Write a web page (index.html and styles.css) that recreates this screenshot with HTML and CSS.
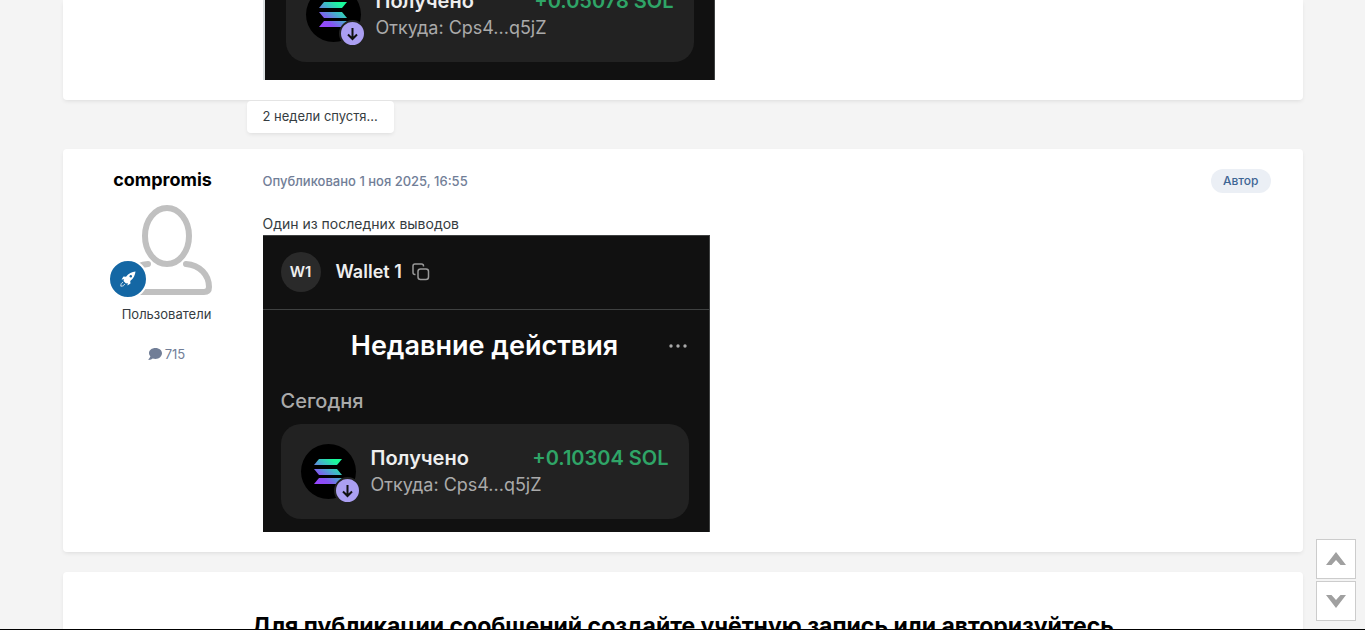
FILE: index.html
```html
<!DOCTYPE html>
<html lang="ru">
<head>
    <meta charset="UTF-8">
    <meta name="viewport" content="width=device-width, initial-scale=1.0">
    <title>Один из последних выводов</title>
    <link rel="stylesheet" href="styles.css">
</head>
<body>
    <!-- shared shapes -->
    <svg class="defs" width="0" height="0" aria-hidden="true">
        <defs>
            <linearGradient id="sol-gradient" gradientUnits="userSpaceOnUse" x1="4" y1="26" x2="24" y2="0">
                <stop offset="0" stop-color="#9945ff"/>
                <stop offset="0.25" stop-color="#8752f3"/>
                <stop offset="0.6" stop-color="#43b4ca"/>
                <stop offset="0.9" stop-color="#19fb9b"/>
            </linearGradient>
            <symbol id="sol" viewBox="0 0 28 26">
                <g fill="url(#sol-gradient)">
                    <path d="M5 0h23l-5 6H0z"/>
                    <path d="M0 10h23l5 6H5z"/>
                    <path d="M5 19h23l-5 6H0z"/>
                </g>
            </symbol>
            <symbol id="arrow-down" viewBox="0 0 23 23">
                <path d="M11.500 6v11M7 12.500l4.500 4.500 4.500-4.500" fill="none" stroke="#111" stroke-width="2"/>
            </symbol>
        </defs>
    </svg>

    <main class="topic">
        <article class="post post-first">
            <div class="post-body">
                <div class="wallet wallet-cut">
                    <div class="tx">
                        <div class="coin">
                            <svg class="coin-logo"><use href="#sol"/></svg>
                            <span class="coin-badge"><svg><use href="#arrow-down"/></svg></span>
                        </div>
                        <div class="tx-info">
                            <div class="tx-row"><strong>Получено</strong><span class="amount">+0.05078 SOL</span></div>
                            <div class="tx-from">Откуда: Cps4...q5jZ</div>
                        </div>
                    </div>
                </div>
            </div>
        </article>

        <div class="gap-note">2 недели спустя...</div>

        <article class="post">
            <aside class="author">
                <h3><a href="#user">compromis</a></h3>
                <div class="author-info">
                    <div class="avatar">
                        <svg class="avatar-img" viewBox="0 0 90 90">
                            <g fill="none" stroke="#c0c0c0" stroke-width="6" stroke-linecap="round">
                                <ellipse cx="45" cy="31" rx="22" ry="28"/>
                                <path d="M26 59C12 60 3 70 3 82Q3 87 8 87H82Q87 87 87 82C87 70 78 60 64 59"/>
                            </g>
                        </svg>
                        <span class="rank">
                            <svg viewBox="0 0 16 16">
                                <path fill="#fff" d="M15.500.5C12 .8 8.500 2.500 6 5.800L3.500 5.500 1.500 8.500l2.600-.2-.6 1.700 2.500 2.500 1.700-.6-.2 2.600 3-2-.3-2.500c3.300-2.500 5-6 5.300-9.500z"/>
                                <circle cx="10.800" cy="5.200" r="1.200" fill="#1467a4"/>
                                <path fill="none" stroke="#fff" stroke-width="0.800" d="M3 11.500C1.500 11.500.8 13 .8 15.200 3 15.200 4.500 14.500 4.500 13"/>
                            </svg>
                        </span>
                    </div>
                    <div class="group">Пользователи</div>
                    <a class="count" href="#posts">
                        <svg viewBox="0 0 14 12">
                            <path fill="#717e97" d="M7.500 0C3.800 0 1 2.200 1 5c0 1.300.5 2.400 1.400 3.300C2 9.800.6 11.200.5 11.300c-.2.200 0 .7.300.7 1.700 0 3-.8 3.900-1.500.8.3 1.800.5 2.800.5C11.200 11 14 8.200 14 5.300S11.200 0 7.500 0z"/>
                        </svg>
                        715
                    </a>
                </div>
            </aside>
            <div class="post-body">
                <header class="post-header">
                    <a class="date" href="#post">Опубликовано 1 ноя 2025, 16:55</a>
                    <span class="op">Автор</span>
                </header>
                <p>Один из последних выводов</p>
                <div class="wallet">
                    <div class="wallet-head">
                        <span class="wallet-icon">W1</span>
                        <span class="wallet-name">Wallet 1</span>
                        <svg class="copy" viewBox="0 0 18 18">
                            <g fill="none" stroke="#999" stroke-width="1.500">
                                <rect x="6" y="6" width="10.500" height="10.500" rx="2.500"/>
                                <path d="M3.500 11.500H3Q1 11.500 1 9.500V3Q1 1 3 1H9.500Q11.500 1 11.500 3V3.500"/>
                            </g>
                        </svg>
                    </div>
                    <div class="wallet-title">
                        <h2>Недавние действия</h2>
                        <svg class="dots" viewBox="0 0 18 4">
                            <g fill="#aaa"><circle cx="2" cy="2" r="1.700"/><circle cx="9" cy="2" r="1.700"/><circle cx="16" cy="2" r="1.700"/></g>
                        </svg>
                    </div>
                    <div class="day">Сегодня</div>
                    <div class="tx">
                        <div class="coin">
                            <svg class="coin-logo"><use href="#sol"/></svg>
                            <span class="coin-badge"><svg><use href="#arrow-down"/></svg></span>
                        </div>
                        <div class="tx-info">
                            <div class="tx-row"><strong>Получено</strong><span class="amount">+0.10304 SOL</span></div>
                            <div class="tx-from">Откуда: Cps4...q5jZ</div>
                        </div>
                    </div>
                </div>
            </div>
        </article>

        <section class="login">
            <h2>Для публикации сообщений создайте учётную запись или авторизуйтесь</h2>
        </section>
    </main>

    <nav class="scroll-nav">
        <button type="button" aria-label="Наверх">
            <svg viewBox="0 0 20 14"><path fill="#a0a0a0" d="M0 13L10 0l10 13h-5.500L10 8l-4.500 5z"/></svg>
        </button>
        <button type="button" aria-label="Вниз">
            <svg viewBox="0 0 20 14"><path fill="#a0a0a0" d="M0 1h5.500L10 6l4.500-5H20L10 14z"/></svg>
        </button>
    </nav>
    <div class="bottom-line"></div>
</body>
</html>
```
FILE: styles.css
```css
* {
    margin: 0;
    padding: 0;
    box-sizing: border-box;
}
body {
    height: 100vh;
    overflow: hidden;
    background: #f4f4f4;
    color: #353c41;
    font-family: Inter, "Liberation Sans", sans-serif;
    font-size: 14px;
    line-height: 22px;
}
a {
    color: inherit;
    text-decoration: none;
}
svg {
    display: block;
}
.defs {
    position: absolute;
}
.topic {
    max-width: 1240px;
    margin: 0 auto;
}
.post,
.login {
    background: #fff;
    border-radius: 4px;
    box-shadow: 0 2px 4px -1px rgba(0,0,0,0.1);
}
.post {
    display: flex;
    padding-bottom: 20px;
    margin-bottom: 20px;
}
.post-first {
    padding-left: 200px;
    margin-bottom: 0;
    border-radius: 0 0 4px 4px;
}
.gap-note {
    width: fit-content;
    margin: 1px 0 16px 184px;
    padding: 4px 16px 6px;
    background: #fff;
    border-radius: 4px;
    box-shadow: 0 2px 4px -1px rgba(0,0,0,0.1);
    font-size: 13px;
}

/* author column */
.author {
    flex: 0 0 200px;
    padding-top: 20px;
    text-align: center;
}
.author h3 {
    color: #000;
    font-size: 18px;
    font-weight: 700;
    line-height: 22px;
}
.author-info {
    display: flex;
    flex-direction: column;
    align-items: center;
    padding: 14px 0 0 8px;
    font-size: 13px;
}
.avatar {
    position: relative;
    width: 90px;
}
.avatar-img {
    width: 90px;
    height: 90px;
}
.rank {
    position: absolute;
    left: -14px;
    bottom: -4px;
    display: flex;
    align-items: center;
    justify-content: center;
    width: 40px;
    height: 40px;
    border: 2px solid #fff;
    border-radius: 50%;
    background: #1467a4;
}
.rank svg {
    width: 16px;
    height: 16px;
}
.group {
    margin: 8px 0 18px;
}
.count {
    display: flex;
    align-items: center;
    gap: 3px;
    color: #717e97;
}
.count svg {
    width: 14px;
    height: 12px;
}

/* post content */
.post-body {
    flex: 1;
    min-width: 0;
}
.post-header {
    display: flex;
    align-items: center;
    justify-content: space-between;
    padding: 20px 32px 0 0;
    margin-bottom: 20px;
}
.date {
    color: #717e97;
    font-size: 13px;
    font-weight: 500;
}
.op {
    padding: 1px 12px;
    border-radius: 12px;
    background: #ebeff5;
    color: #3d6594;
    font-size: 12px;
    font-weight: 500;
}

/* wallet */
.wallet {
    width: 447px;
    max-width: 100%;
    padding-bottom: 13px;
    border-top: 1px solid #3f4141;
    border-right: 1px solid #3f4141;
    background: #111;
    color: #fff;
}
.wallet-cut {
    display: flex;
    align-items: flex-end;
    overflow: hidden;
    width: 452px;
    height: 80px;
    padding: 0 2px 18px 3px;
    border-top: 0;
    border-left: 2px solid #dce1e3;
}
.wallet-head {
    display: flex;
    align-items: center;
    height: 74px;
    padding: 0 18px 1px;
    border-bottom: 1px solid #3f4141;
    color: #eee;
    font-weight: 600;
}
.wallet-icon {
    width: 40px;
    margin-right: 15px;
    border-radius: 50%;
    background: #2a2a2a;
    text-align: center;
    font-size: 15px;
    line-height: 40px;
}
.wallet-name {
    margin-right: 10px;
    font-size: 18px;
}
.copy {
    width: 18px;
    height: 18px;
}
.wallet-title {
    display: grid;
    grid-template-columns: 18px 1fr 18px;
    align-items: center;
    padding: 18px 22px 18px 20px;
}
.wallet-title h2 {
    grid-column: 2;
    font-size: 27px;
    font-weight: 600;
    line-height: 36px;
    text-align: center;
}
.dots {
    width: 18px;
    height: 4px;
}
.day {
    padding: 7px 18px 11px;
    color: #aaa;
    font-size: 20px;
    font-weight: 500;
    line-height: 24px;
}
.tx {
    display: flex;
    flex: 0 0 408px;
    align-items: center;
    gap: 15px;
    height: 95px;
    margin: 0 20px 0 18px;
    padding: 0 20px;
    border-radius: 20px;
    background: #222;
}
.coin {
    position: relative;
    display: flex;
    align-items: center;
    justify-content: center;
    width: 55px;
    height: 55px;
    border-radius: 50%;
    background: #000;
}
.coin-logo {
    width: 28px;
    height: 26px;
}
.coin-badge {
    position: absolute;
    right: -5px;
    bottom: -5px;
    border: 2px solid #222;
    border-radius: 50%;
    background: #ab9ff2;
}
.coin-badge svg {
    width: 23px;
    height: 23px;
}
.tx-info {
    flex: 1;
    padding-bottom: 2px;
}
.tx-row {
    display: flex;
    justify-content: space-between;
    font-size: 20px;
    font-weight: 600;
    line-height: 28px;
}
.tx-row strong {
    color: #eee;
    font-weight: 600;
}
.amount {
    color: #2fa567;
}
.tx-from {
    color: #aaa;
    font-size: 18px;
    line-height: 26px;
}

.login {
    padding: 38px 20px;
    text-align: center;
}
.login h2 {
    color: #000;
    font-size: 23px;
    font-weight: 700;
    line-height: 32px;
}

/* page scroll buttons */
.scroll-nav {
    position: fixed;
    right: 9px;
    bottom: 9px;
    display: flex;
    flex-direction: column;
    gap: 2px;
}
.scroll-nav button {
    display: flex;
    align-items: center;
    justify-content: center;
    width: 40px;
    height: 40px;
    border: 1px solid #ccc;
    background: #fff;
    cursor: pointer;
}
.scroll-nav svg {
    width: 20px;
    height: 14px;
}
.bottom-line {
    position: fixed;
    right: 0;
    bottom: 0;
    left: 0;
    height: 1px;
    background: #000;
}
```
